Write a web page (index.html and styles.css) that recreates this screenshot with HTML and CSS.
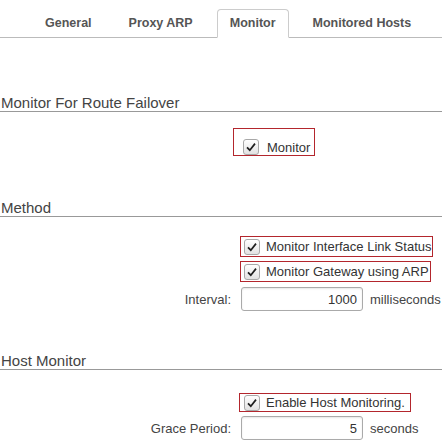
FILE: index.html
```html
<!DOCTYPE html>
<html lang="en">
<head>
    <meta charset="UTF-8">
    <meta name="viewport" content="width=device-width, initial-scale=1.0">
    <title>Monitor</title>
    <link rel="stylesheet" href="styles.css">
</head>
<body>
    <!-- Tab bar -->
    <ul class="tabs">
        <li class="tab">General</li>
        <li class="tab">Proxy ARP</li>
        <li class="tab active">Monitor</li>
        <li class="tab">Monitored Hosts</li>
    </ul>

    <!-- Monitor for route failover -->
    <div class="section section-first">
        <h2>Monitor For Route Failover</h2>
        <div class="row row-monitor">
            <label class="check-box check-main">
                <span class="check"><svg viewBox="0 0 16 16" width="16" height="16"><polyline points="4,8.3 6.8,11.2 12,4.6" /></svg></span>
                Monitor
            </label>
        </div>
    </div>

    <!-- Method -->
    <div class="section section-method">
        <h2>Method</h2>
        <div class="row row-check row-first">
            <label class="check-box check-wide">
                <span class="check"><svg viewBox="0 0 16 16" width="16" height="16"><polyline points="4,8.3 6.8,11.2 12,4.6" /></svg></span>
                Monitor Interface Link Status
            </label>
        </div>
        <div class="row row-check row-tight">
            <label class="check-box check-wide">
                <span class="check"><svg viewBox="0 0 16 16" width="16" height="16"><polyline points="4,8.3 6.8,11.2 12,4.6" /></svg></span>
                Monitor Gateway using ARP
            </label>
        </div>
        <div class="row row-field">
            <span class="row-label">Interval:</span>
            <input class="num" type="text" value="1000">
            <span class="unit">milliseconds</span>
        </div>
    </div>

    <!-- Host monitor -->
    <div class="section section-host">
        <h2>Host Monitor</h2>
        <div class="row row-check row-enable">
            <label class="check-box check-small">
                <span class="check"><svg viewBox="0 0 16 16" width="16" height="16"><polyline points="4,8.3 6.8,11.2 12,4.6" /></svg></span>
                Enable Host Monitoring.
            </label>
        </div>
        <div class="row row-field">
            <span class="row-label">Grace Period:</span>
            <input class="num" type="text" value="5">
            <span class="unit">seconds</span>
        </div>
    </div>
</body>
</html>
```

FILE: styles.css
```css
/* Global styles */
body {
    margin: 0;
    padding: 0;
    font-family: 'Liberation Sans', Arial, sans-serif;
    font-size: 13px;
    color: #333;
    background: #fff;
}

/* Tab bar */
.tabs {
    display: flex;
    list-style: none;
    margin: 9px 0 0;
    padding: 0 0 0 32px;
    border-bottom: 1px solid #bbb;
    height: 28px;
}

.tab {
    padding: 0 12px;
    margin-right: 11px;
    height: 27px;
    line-height: 27px;
    border: 1px solid transparent;
    border-bottom: none;
    font-size: 12.5px;
    font-weight: bold;
    color: #555;
}

.tab.active {
    border-color: #ccc;
    border-bottom: 1px solid #fff;
    border-radius: 4px 4px 0 0;
    background: #fff;
    margin-bottom: -1px;
}

/* Sections */
.section h2 {
    margin: 0;
    padding-left: 1px;
    font-size: 15px;
    line-height: 17px;
    font-weight: normal;
    color: #444;
    border-bottom: 1px solid #999;
}

.section-first {
    margin-top: 56px;
}

.section-method {
    margin-top: 43px;
}

.section-host {
    margin-top: 41px;
}

/* Form rows */
.row {
    display: flex;
    align-items: center;
}

.row-monitor {
    margin-top: 16px;
    padding-left: 233px;
}

.row-check {
    padding-left: 240px;
}

.row-first {
    margin-top: 19px;
}

.row-tight {
    margin-top: 4px;
}

.row-enable {
    margin-top: 23px;
    padding-left: 239px;
}

.row-field {
    margin-top: 5px;
}

.row-enable + .row-field {
    margin-top: 4px;
}

.row-label {
    width: 231px;
    margin-right: 10px;
    text-align: right;
    color: #444;
}

/* Highlighted checkbox labels */
.check-box {
    display: inline-flex;
    align-items: center;
    gap: 6px;
    border: 1px solid #b3262d;
    color: #333;
    white-space: nowrap;
}

.check-main {
    padding: 10px 4px 0 9px;
    height: 16px;
    gap: 8px;
}

.check-wide {
    height: 19px;
    padding: 0 1px 0 3px;
}

.check-small {
    height: 17px;
    padding: 0 5px 0 4px;
}

.check {
    display: inline-block;
    flex: none;
    width: 14px;
    height: 14px;
    border: 1px solid #a8a8a8;
    border-radius: 3px;
    background: linear-gradient(#fff, #e2e2e2);
    position: relative;
}

.check svg {
    position: absolute;
    left: -1px;
    top: -1px;
    fill: none;
    stroke: #1e1e1e;
    stroke-width: 1.7;
}

/* Number inputs */
.num {
    box-sizing: border-box;
    width: 122px;
    height: 24px;
    border: 1px solid #aaa;
    border-radius: 3px;
    box-shadow: inset 0 1px 2px rgba(0, 0, 0, 0.1);
    padding: 0 5px;
    text-align: right;
    font-family: 'Liberation Sans', Arial, sans-serif;
    font-size: 13px;
    color: #333;
}

.unit {
    margin-left: 7px;
    color: #444;
}
```
